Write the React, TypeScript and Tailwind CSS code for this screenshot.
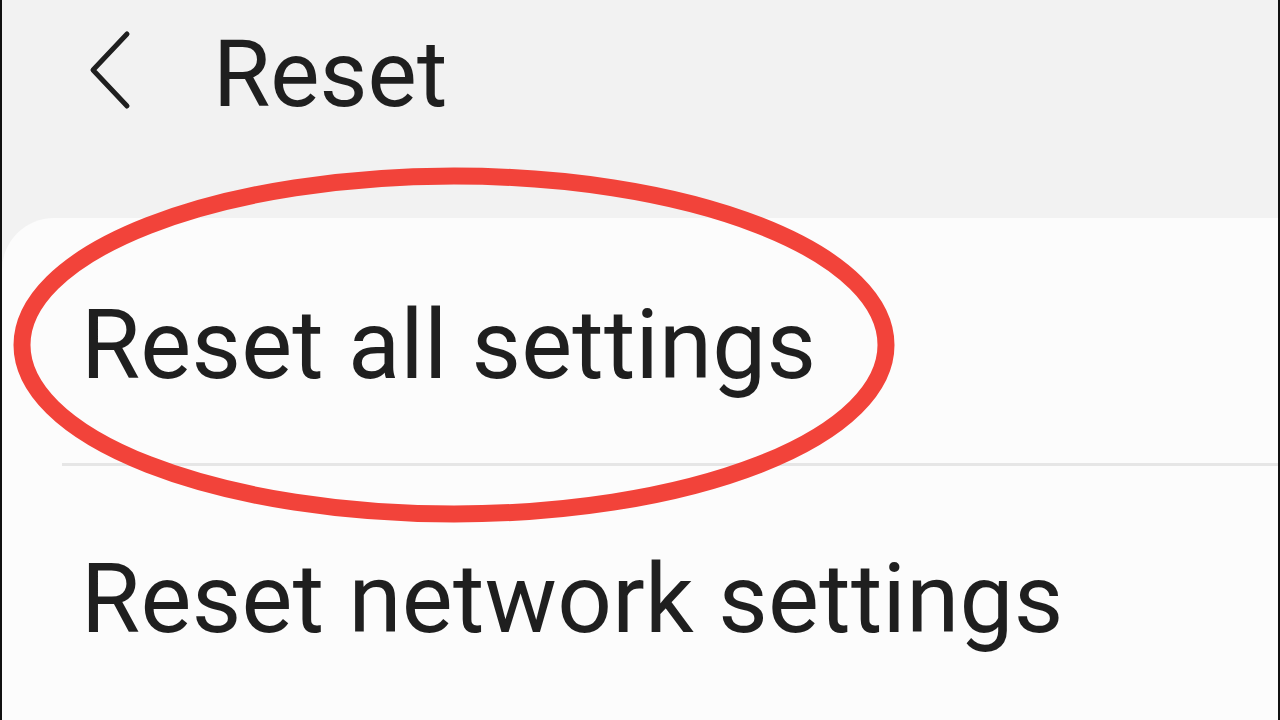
import React from 'react';

const font = { fontFamily: 'Roboto, "Noto Sans", sans-serif' };

export default function App() {
  return (
    <div
      className="relative w-[1280px] h-[720px] overflow-hidden bg-[#f2f2f2] border-l-2 border-r-2 border-[#111]"
      style={font}
    >
      {/* Top bar */}
      <div className="h-[218px] flex items-start pt-[28px]">
        <svg className="ml-[86px] mt-[2px]" width="48" height="80" viewBox="0 0 48 80" fill="none">
          <path d="M39 4 L5 40 L39 76" stroke="#1f1f1f" strokeWidth="5" strokeLinecap="round" strokeLinejoin="round" />
        </svg>
        <h1 className="ml-[77px] text-[93px] leading-none text-[#1f1f1f]">Reset</h1>
      </div>

      {/* List card */}
      <div className="bg-[#fcfcfc] rounded-tl-[52px] h-[502px]">
        <div className="h-[245px] pt-[79px] pl-[79px]">
          <p className="text-[96px] leading-none text-[#1f1f1f] tracking-[0.2px]">Reset all settings</p>
        </div>
        <div className="ml-[60px] h-[3px] bg-[#e6e6e6]" />
        <div className="pt-[85px] pl-[79px]">
          <p className="text-[96px] leading-none text-[#1f1f1f] tracking-[0.3px]">Reset network settings</p>
        </div>
      </div>

      {/* Red highlight ring */}
      <svg className="absolute inset-0 pointer-events-none" width="1280" height="720" viewBox="0 0 1280 720">
        <ellipse cx="452" cy="345" rx="432" ry="169" fill="none" stroke="#f2433a" strokeWidth="17" />
      </svg>
    </div>
  );
}
